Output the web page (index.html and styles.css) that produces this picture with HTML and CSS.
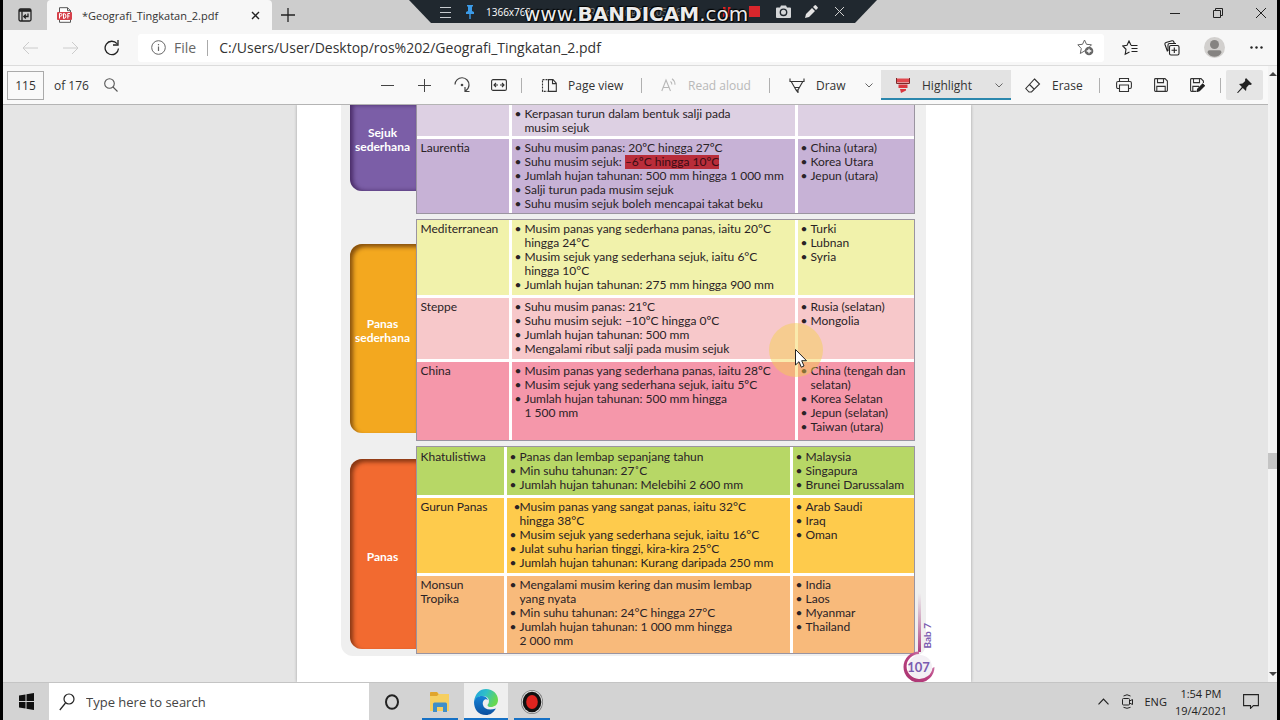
FILE: index.html
```html
<!DOCTYPE html>
<html lang="ms">
<head>
    <meta charset="UTF-8">
    <meta name="viewport" content="width=device-width, initial-scale=1.0">
    <title>Geografi_Tingkatan_2.pdf</title>
    <link rel="stylesheet" href="styles.css">
</head>
<body>
    <header class="tab-strip">
        <button class="tab-actions" aria-label="Tab actions">
            <svg width="14" height="14" viewBox="0 0 14 14" fill="none" stroke="#222" stroke-width="1.3"><rect x="1" y="1" width="12" height="12" rx="1.5"/><path d="M1 2.500h12" stroke-width="2.6"/><path d="M4 3v10M10 5.500v3H6M7.800 6.500l-2 2 2 2"/></svg>
        </button>
        <div class="tab">
            <svg width="16" height="16" viewBox="0 0 16 16"><path d="M2.500.7h8l3 3v11.600h-11z" fill="#fff" stroke="#555"/><path d="M10.500.7v3h3" fill="none" stroke="#555"/><rect x="0" y="5" width="15" height="8" rx="1" fill="#d6404a"/><path d="M2.500 11.500v-5h1.300q1.200 0 1.200 1.300T3.800 9.100H2.500M6.500 6.500v5q2.500 0 2.500-2.500T6.500 6.500M10.800 11.500v-5H13M10.800 9h1.800" fill="none" stroke="#fff"/></svg>
            <span class="tab-title">*Geografi_Tingkatan_2.pdf</span>
            <button class="tab-close" aria-label="Close tab">
                <svg width="9" height="9" viewBox="0 0 9 9" stroke="#222" stroke-width="1.400"><path d="M1 1l7 7M8 1L1 8"/></svg>
            </button>
        </div>
        <button class="new-tab" aria-label="New tab">
            <svg width="14" height="14" viewBox="0 0 14 14" stroke="#222" stroke-width="1.300"><path d="M7 0v14M0 7h14"/></svg>
        </button>
        <div class="window-buttons">
            <button aria-label="Minimize"><svg width="10" height="10" viewBox="0 0 10 10" stroke="#222"><path d="M0 5.500h10"/></svg></button>
            <button aria-label="Restore"><svg width="10" height="10" viewBox="0 0 10 10" fill="none" stroke="#222"><path d="M.5 2.500h7v7h-7zM2.500 2.500v-2h7v7h-2"/></svg></button>
            <button aria-label="Close"><svg width="10" height="10" viewBox="0 0 10 10" stroke="#222"><path d="M0 0l10 10M10 0L0 10"/></svg></button>
        </div>

        <!-- recorder bar floating over the tab strip -->
        <div class="recorder">
            <svg width="12" height="12" viewBox="0 0 12 12" stroke="#c8ccd0"><path d="M0 1.500h11M0 6.500h11M0 11.500h11"/></svg>
            <svg class="rec-pin" width="10" height="14" viewBox="0 0 10 14" fill="#3b9be8"><path d="M2 0h6v1.500H7V6l2 1v2H1V7l2-1V1.500H2zM4.300 9h1.400v5H4.300z"/></svg>
            <span class="rec-size">1366x768</span>
            <span class="rec-status">Recording [00:05:26]</span>
            <svg class="rec-pause" width="8" height="10" viewBox="0 0 8 10" fill="#d22"><path d="M0 0h2.500v10H0zM5 0h2.500v10H5z"/></svg>
            <svg class="rec-stop" width="11" height="11" viewBox="0 0 11 11"><path fill="#d8262c" d="M0 0h11v11H0z"/></svg>
            <svg class="rec-photo" width="15" height="13" viewBox="0 0 15 13"><path d="M1 2.500h3L5 .5h5l1 2h3q1 0 1 1V12q0 1-1 1H1q-1 0-1-1V3.500q0-1 1-1z" fill="#d4d6d8"/><circle cx="7.500" cy="7.300" r="3.200" fill="none" stroke="#20282f" stroke-width="1.400"/></svg>
            <svg class="rec-pen" width="13" height="13" viewBox="0 0 13 13" fill="#e4e4e4"><path d="M0 13l1-4 6-6 3 3-6 6zM8 2l1.500-1.500q.8-.8 1.600 0L12.500 2q.8.8 0 1.500L11 5z"/></svg>
            <svg width="9" height="9" viewBox="0 0 9 9" stroke="#d0d0d0"><path d="M0 0l9 9M9 0L0 9"/></svg>
            <strong class="watermark">www.<b>BANDICAM</b>.com</strong>
        </div>
    </header>

    <nav class="address-row">
        <div class="nav-buttons">
            <button aria-label="Back"><svg width="16" height="14" viewBox="0 0 16 14" fill="none" stroke="#ccc"><path d="M16 7H1M7 1L1 7l6 6"/></svg></button>
            <button aria-label="Forward"><svg width="16" height="14" viewBox="0 0 16 14" fill="none" stroke="#ccc"><path d="M0 7h15M9 1l6 6-6 6"/></svg></button>
            <button aria-label="Refresh"><svg width="16" height="16" viewBox="0 0 16 16" fill="none" stroke="#222" stroke-width="1.300"><path d="M14.500 8.500A6.700 6.700 0 1 1 13 3.700M14 0v5H9"/></svg></button>
        </div>
        <div class="address-box">
            <svg width="15" height="15" viewBox="0 0 15 15" fill="none" stroke="#666"><circle cx="7.500" cy="7.500" r="6.800"/><path d="M7.500 6.500V11M7.500 4v1.300" stroke-width="1.200"/></svg>
            <label class="scheme" for="url">File</label>
            <input id="url" type="text" value="C:/Users/User/Desktop/ros%202/Geografi_Tingkatan_2.pdf">
            <button aria-label="Add to favorites">
                <svg width="17" height="17" viewBox="0 0 17 17" fill="none" stroke="#666"><path d="M7.500 1l2 4.300 5 .5-2 2M8 11.700L3.300 14.500l1-5L.8 5.800l4.700-.5L7.500 1"/><circle cx="12" cy="12" r="4.300" fill="#666" stroke="none"/><path d="M12 9.700v4.600M9.700 12h4.600" stroke="#fff" stroke-width="1.300"/></svg>
            </button>
        </div>
        <div class="browser-buttons">
            <button aria-label="Favorites"><svg width="16" height="16" viewBox="0 0 16 16" fill="none" stroke="#222" stroke-width="1.100"><path d="M9 5.300L7 1 5 5.300.8 6l3.200 3.300-.8 5L7.500 12M9 5.500h6.500M9.500 8.500h6M9.500 11.500h6"/></svg></button>
            <button aria-label="Collections"><svg width="16" height="16" viewBox="0 0 16 16" fill="none" stroke="#222" stroke-width="1.100"><rect x="5.500" y="5.500" width="9.500" height="9.500" rx="1.500"/><path d="M10.300 7.500v5.500M7.500 10.300H13M3.500 11.500L1 4.500Q.6 3 2 2.500L8 .8q1.300-.3 1.800 1l.5 1.700M4 11V5q0-1.500 1.500-1.500H12"/></svg></button>
            <button aria-label="Profile"><svg width="21" height="21" viewBox="0 0 21 21"><circle cx="10.500" cy="10.500" r="10.500" fill="#d2d0ce"/><circle cx="10.500" cy="7.500" r="4.500" fill="#858381"/><path d="M3.500 15.500q0-2.200 2-2.200h10q2 0 2 2.200-2.300 4.300-7 4.300t-7-4.300z" fill="#858381"/></svg></button>
            <button aria-label="Settings and more"><svg width="13" height="3" viewBox="0 0 13 3" fill="#222"><circle cx="1.500" cy="1.500" r="1.200"/><circle cx="6.500" cy="1.500" r="1.200"/><circle cx="11.500" cy="1.500" r="1.200"/></svg></button>
        </div>
    </nav>

    <main class="content">
        <div class="pdf">
            <div class="toolbar">
                <input class="page-input" id="page" type="text" value="115">
                <label class="page-total" for="page">of 176</label>
                <button class="icon-btn find" aria-label="Find"><svg width="14" height="14" viewBox="0 0 14 14" fill="none" stroke="#555" stroke-width="1.100"><circle cx="5.500" cy="5.500" r="4.800"/><path d="M9 9l4.500 4.500"/></svg></button>

                <div class="tools">
                    <button class="icon-btn" aria-label="Zoom out"><svg width="13" height="13" viewBox="0 0 13 13" stroke="#444"><path d="M0 6.500h13"/></svg></button>
                    <button class="icon-btn" aria-label="Zoom in"><svg width="13" height="13" viewBox="0 0 13 13" stroke="#444"><path d="M0 6.500h13M6.500 0v13"/></svg></button>
                    <button class="icon-btn" aria-label="Rotate"><svg width="16" height="16" viewBox="0 0 16 16" fill="none" stroke="#444" stroke-width="1.200"><path d="M1 7.500A7 7 0 0 1 15 8q0 3.500-3.500 6M11 10v4.500h4.500"/><circle cx="8" cy="8" r="1.300" fill="#444" stroke="none"/></svg></button>
                    <button class="icon-btn" aria-label="Fit to width"><svg width="16" height="12" viewBox="0 0 16 12" fill="none" stroke="#333" stroke-width="1.100"><rect x=".6" y=".6" width="14.800" height="10.800" rx="1.500"/><path d="M7 6H3M5 4L3 6l2 2M9 6h4M11 4l2 2-2 2"/></svg></button>
                    <span class="sep"></span>
                    <button class="tool page-view"><svg width="16" height="13" viewBox="0 0 16 13" fill="none" stroke="#333" stroke-width="1.100"><path d="M6.500.6h-5v11.800h5" stroke-dasharray="2 1"/><path d="M7.500.6H12l3.300 3.500v8.300H7.500zM11.500.6v4h3.800"/></svg>Page view</button>
                    <span class="sep"></span>
                    <button class="tool read-aloud" disabled><svg width="16" height="14" viewBox="0 0 16 14" fill="none" stroke="#b8b8b8" stroke-width="1.100"><path d="M.8 13L5 2l4.500 11M2.300 9.500h5.500M9.500 3.500q1.500 1 1.300 3M11 .8q3 2 3 6"/></svg>Read aloud</button>
                    <span class="sep"></span>
                    <button class="tool draw"><svg width="16" height="15" viewBox="0 0 16 15" fill="none" stroke="#333" stroke-width="1.100"><path d="M1 .5v3h14v-3M2.200 3.500L7 12l2 2.500V12l4.800-8.500M5.500 9.500h5M7 12h2"/></svg>Draw<svg class="chevron" width="8" height="5" viewBox="0 0 8 5" fill="none" stroke="#666"><path d="M.5.5L4 4 7.500.5"/></svg></button>
                    <button class="tool highlight"><svg width="16" height="15" viewBox="0 0 16 15"><path d="M2 .5h12v4H2z" fill="#e0484e"/><path d="M1.500 0v5.500h13V0" fill="none" stroke="#7a2a2a"/><path d="M3.500 6.500h9V10h-9z" fill="#d9363e"/><path d="M5 11h6v1.500L6 15z" fill="#d9363e"/></svg>Highlight<svg class="chevron" width="8" height="5" viewBox="0 0 8 5" fill="none" stroke="#666"><path d="M.5.5L4 4 7.500.5"/></svg></button>
                    <button class="tool erase"><svg width="16" height="15" viewBox="0 0 16 15" fill="none" stroke="#333" stroke-width="1.100"><path d="M9.500 1l5 5-8 8H4L.8 10.500zM4.500 6.500l5 5"/></svg>Erase</button>
                    <span class="sep"></span>
                    <button class="icon-btn" aria-label="Print"><svg width="16" height="14" viewBox="0 0 16 14" fill="none" stroke="#333" stroke-width="1.100"><path d="M3.500 3.500v-3h9v3M3.500 10.500H2Q.6 10.500.6 9V5Q.6 3.500 2 3.500h12q1.400 0 1.400 1.500v4q0 1.500-1.400 1.500h-1.500M3.500 7h9v6.500h-9z"/></svg></button>
                    <button class="icon-btn" aria-label="Save"><svg width="14" height="14" viewBox="0 0 14 14" fill="none" stroke="#333" stroke-width="1.100"><path d="M.6 1.500q0-.9.900-.9h9.500l2.400 2.400v9.500q0 .9-.9.900H1.500q-.9 0-.9-.9zM3.500.6v4h6v-4M2.800 13.400v-5h8.400v5"/></svg></button>
                    <button class="icon-btn" aria-label="Save as"><svg width="15" height="14" viewBox="0 0 15 14" fill="none" stroke="#333" stroke-width="1.100"><path d="M6 13.400H1.500q-.9 0-.9-.9v-11q0-.9.900-.9h9.500l2.400 2.400V5M3.500.6v4h6v-4M2.800 13v-4.600H9"/><path d="M7 13.500l.7-2.500 5-5 1.700 1.700-5 5z" fill="#222" stroke="#222"/></svg></button>
                    <span class="sep"></span>
                    <button class="icon-btn pinned" aria-label="Unpin toolbar"><svg width="15" height="15" viewBox="0 0 15 15" fill="#222"><path d="M9 0l6 6-1.500 1L12 6.800 9.500 9.500 9 13 5.800 9.900 1 15l-1-.2L4.900 9 2 6l3.500-.5L8.200 3 8 1.500z"/></svg></button>
                </div>
            </div>

            <div class="viewer">
                <article class="page">
                    <div class="panel">
                        <section class="group">
                            <h2 class="zone zone-purple">Sejuk sederhana</h2>
                            <table>
                                <tr class="lilac">
                                    <td class="name"></td>
                                    <td class="traits"><ul><li>Kerpasan turun dalam bentuk salji pada<br>musim sejuk</li></ul></td>
                                    <td></td>
                                </tr>
                                <tr class="violet">
                                    <td>Laurentia</td>
                                    <td><ul>
                                        <li>Suhu musim panas: 20ºC hingga 27ºC</li>
                                        <li>Suhu musim sejuk: <mark>–6ºC hingga 10ºC</mark></li>
                                        <li>Jumlah hujan tahunan: 500 mm hingga 1 000 mm</li>
                                        <li>Salji turun pada musim sejuk</li>
                                        <li>Suhu musim sejuk boleh mencapai takat beku</li>
                                    </ul></td>
                                    <td><ul><li>China (utara)</li><li>Korea Utara</li><li>Jepun (utara)</li></ul></td>
                                </tr>
                            </table>
                        </section>

                        <section class="group">
                            <h2 class="zone zone-amber">Panas sederhana</h2>
                            <table>
                                <tr class="yellow">
                                    <td class="name">Mediterranean</td>
                                    <td class="traits"><ul>
                                        <li>Musim panas yang sederhana panas, iaitu 20°C<br>hingga 24°C</li>
                                        <li>Musim sejuk yang sederhana sejuk, iaitu 6°C<br>hingga 10°C</li>
                                        <li>Jumlah hujan tahunan: 275 mm hingga 900 mm</li>
                                    </ul></td>
                                    <td><ul><li>Turki</li><li>Lubnan</li><li>Syria</li></ul></td>
                                </tr>
                                <tr class="rose">
                                    <td>Steppe</td>
                                    <td><ul>
                                        <li>Suhu musim panas: 21ºC</li>
                                        <li>Suhu musim sejuk: –10ºC hingga 0ºC</li>
                                        <li>Jumlah hujan tahunan: 500 mm</li>
                                        <li>Mengalami ribut salji pada musim sejuk</li>
                                    </ul></td>
                                    <td><ul><li>Rusia (selatan)</li><li>Mongolia</li></ul></td>
                                </tr>
                                <tr class="pink">
                                    <td>China</td>
                                    <td><ul>
                                        <li>Musim panas yang sederhana panas, iaitu 28ºC</li>
                                        <li>Musim sejuk yang sederhana sejuk, iaitu 5ºC</li>
                                        <li>Jumlah hujan tahunan: 500 mm hingga<br>1 500 mm</li>
                                    </ul></td>
                                    <td><ul><li>China (tengah dan<br>selatan)</li><li>Korea Selatan</li><li>Jepun (selatan)</li><li>Taiwan (utara)</li></ul></td>
                                </tr>
                            </table>
                        </section>

                        <section class="group hot">
                            <h2 class="zone zone-orange">Panas</h2>
                            <table>
                                <tr class="green">
                                    <td class="name">Khatulistiwa</td>
                                    <td class="traits"><ul>
                                        <li>Panas dan lembap sepanjang tahun</li>
                                        <li>Min suhu tahunan: 27˚C</li>
                                        <li>Jumlah hujan tahunan: Melebihi 2 600 mm</li>
                                    </ul></td>
                                    <td><ul><li>Malaysia</li><li>Singapura</li><li>Brunei Darussalam</li></ul></td>
                                </tr>
                                <tr class="gold">
                                    <td>Gurun Panas</td>
                                    <td><ul>
                                        <li class="tight">Musim panas yang sangat panas, iaitu 32°C<br>hingga 38°C</li>
                                        <li>Musim sejuk yang sederhana sejuk, iaitu 16°C</li>
                                        <li>Julat suhu harian tinggi, kira-kira 25°C</li>
                                        <li>Jumlah hujan tahunan: Kurang daripada 250 mm</li>
                                    </ul></td>
                                    <td><ul><li>Arab Saudi</li><li>Iraq</li><li>Oman</li></ul></td>
                                </tr>
                                <tr class="peach">
                                    <td>Monsun<br>Tropika</td>
                                    <td><ul>
                                        <li>Mengalami musim kering dan musim lembap<br>yang nyata</li>
                                        <li>Min suhu tahunan: 24°C hingga 27°C</li>
                                        <li>Jumlah hujan tahunan: 1 000 mm hingga<br>2 000 mm</li>
                                    </ul></td>
                                    <td><ul><li>India</li><li>Laos</li><li>Myanmar</li><li>Thailand</li></ul></td>
                                </tr>
                            </table>
                        </section>
                    </div>

                    <div class="chapter">Bab 7</div>
                    <div class="folio">
                        <svg width="32" height="90" viewBox="0 0 32 90" fill="none">
                            <defs>
                                <linearGradient id="stem" x1="0" y1="0" x2="0" y2="1"><stop offset="0" stop-color="#b05a92" stop-opacity="0"/><stop offset="1" stop-color="#ad3f80"/></linearGradient>
                                <linearGradient id="ring" x1="1" y1="0" x2="0" y2="1"><stop offset="0" stop-color="#d9a3c4"/><stop offset=".5" stop-color="#b93f80"/><stop offset="1" stop-color="#a8356f"/></linearGradient>
                            </defs>
                            <path d="M15 0h3v59h-3z" fill="url(#stem)"/>
                            <circle cx="17" cy="74" r="12" fill="#f3eff4"/>
                            <path d="M16 58.500A15.500 15.500 0 1 0 31.500 74l-2 1A13 12.500 0 1 1 16 61z" fill="url(#ring)"/>
                        </svg>
                        <span>107</span>
                    </div>
                    <div class="pointer">
                        <svg width="54" height="54" viewBox="0 0 54 54"><circle cx="27" cy="27" r="27" fill="#f3d04a" fill-opacity=".45"/><path d="M26.500 26.500v15.500l3.500-3.300 2.300 5.500 2.700-1.200-2.300-5.300h4.800z" fill="#fff" stroke="#222"/></svg>
                    </div>
                </article>
            </div>
        </div>

        <div class="scrollbar">
            <span class="arrow up"></span>
            <span class="thumb"></span>
            <span class="arrow down"></span>
        </div>
    </main>

    <footer class="taskbar">
        <button class="start" aria-label="Start"><svg width="15" height="17" viewBox="0 0 15 17" fill="#111"><path d="M0 2.500l6.500-1V8H0zM7.500 1.300L15 0v8H7.500zM0 9h6.500v6.500L0 14.500zM7.500 9H15v8l-7.500-1.300z"/></svg></button>
        <label class="search">
            <svg width="16" height="18" viewBox="0 0 16 18" fill="none" stroke="#222" stroke-width="1.200"><circle cx="10" cy="6" r="5"/><path d="M6.500 10L.8 17"/></svg>
            <input type="text" placeholder="Type here to search" aria-label="Search">
        </label>
        <button class="app cortana" aria-label="Cortana"><svg width="14" height="16" viewBox="0 0 14 16" fill="none" stroke="#222" stroke-width="2"><ellipse cx="7" cy="8" rx="6" ry="6.800"/></svg></button>
        <button class="app open" aria-label="File Explorer"><svg width="20" height="20" viewBox="0 0 20 20"><path d="M0 1q0-1 1-1h6l2 2h10v17H0z" fill="#f6cf60"/><path d="M0 1q0-1 1-1h6l1.500 2.500L7 4H0z" fill="#e0a52c"/><path d="M3 20v-8q0-1.500 1.500-1.500h11Q17 10.500 17 12v8h-4v-5H7v5z" fill="#3f8fc8"/></svg></button>
        <button class="app open active" aria-label="Microsoft Edge">
            <svg width="24" height="26" viewBox="0 0 24 26">
                <defs>
                    <linearGradient id="edge-top" x1="0" y1="0" x2="1" y2=".4"><stop offset="0" stop-color="#1e9fe0"/><stop offset=".5" stop-color="#2fc0c8"/><stop offset="1" stop-color="#66d850"/></linearGradient>
                    <linearGradient id="edge-low" x1="0" y1="0" x2="0" y2="1"><stop offset="0" stop-color="#1684d8"/><stop offset="1" stop-color="#0c4f9e"/></linearGradient>
                </defs>
                <path d="M0 13C1 4 6 0 12 0c7 0 12 5 12 11 0 5-4 7-7 7-4 0-4-2-2.500-3.500C16 11 14 7 9 7 4 7 1 10 0 13z" fill="url(#edge-top)"/>
                <path d="M0 13C1 9 4 7 8 7c3 0 5 1.500 6 4-3-2-6 1-5 5 1 4 6 6 13 3.500C19 24 16 26 12 26 4 26 0 20 0 13z" fill="url(#edge-low)"/>
            </svg>
        </button>
        <button class="app open" aria-label="Bandicam"><svg width="22" height="24" viewBox="0 0 22 24"><ellipse cx="11" cy="12" rx="11" ry="12" fill="#777"/><ellipse cx="11" cy="12" rx="10.300" ry="11.300" fill="#ddd"/><ellipse cx="11" cy="12" rx="9.300" ry="10.300" fill="#111"/><ellipse cx="11" cy="12" rx="5.800" ry="7" fill="#e0241f"/></svg></button>
        <div class="tray">
            <svg width="11" height="7" viewBox="0 0 11 7" fill="none" stroke="#222" stroke-width="1.200"><path d="M.5 6.300L5.500 1l5 5.300"/></svg>
            <svg class="meet" width="11" height="15" viewBox="0 0 11 15" fill="none" stroke="#222"><rect x=".5" y="4.500" width="7" height="6.500" rx="1"/><path d="M7.500 7l3-1.500v5l-3-1.500M1.500 2q3.500-2.500 7 0M1.500 13.300q3.500 2 7 0"/></svg>
            <span class="lang">ENG</span>
            <time class="clock">1:54 PM<br>19/4/2021</time>
            <svg class="notices" width="16" height="15" viewBox="0 0 16 15" fill="none" stroke="#222" stroke-width="1.100"><path d="M.6.6h14.800v11h-5L7.500 14.400v-2.800H.6z"/></svg>
        </div>
    </footer>
</body>
</html>
```

FILE: styles.css
```css
* {
    box-sizing: border-box;
}
body {
    margin: 0;
    padding: 0 3px;
    height: 100vh;
    display: flex;
    flex-direction: column;
    overflow: hidden;
    background-color: #000;
    color: #333;
    font-family: "Open Sans", "Noto Sans", sans-serif;
    font-size: 12px;
}
button {
    display: flex;
    align-items: center;
    justify-content: center;
    margin: 0;
    padding: 0;
    border: none;
    background: none;
    color: inherit;
    font: inherit;
}
input {
    border: none;
    padding: 0;
    background: none;
    color: inherit;
    font: inherit;
}
svg {
    display: block;
    flex: none;
}

/* tab strip */
.tab-strip {
    position: relative;
    display: flex;
    flex: none;
    height: 30px;
    background-color: #cdcdcd;
}
.tab-actions {
    width: 44px;
}
.tab {
    display: flex;
    align-items: center;
    width: 225px;
    padding: 0 12px 0 10px;
    border-radius: 4px 4px 0 0;
    background-color: #f7f7f7;
}
.tab-title {
    flex: 1;
    padding-left: 9px;
    font-size: 11px;
}
.new-tab {
    width: 32px;
}
.window-buttons {
    display: flex;
    gap: 11px;
    height: 26px;
    margin-left: auto;
}
.window-buttons button {
    width: 32px;
}

.recorder {
    position: absolute;
    top: 0;
    left: 406px;
    width: 468px;
    height: 23px;
    display: flex;
    align-items: center;
    padding: 0 33px 0 31px;
    background-color: #20282f;
    clip-path: polygon(0 0, 100% 0, 446px 100%, 22px 100%);
    color: #fff;
    font-size: 10px;
}
.rec-pin {
    margin-left: 13px;
}
.rec-size {
    margin-left: 11px;
}
.rec-status {
    margin-left: 58px;
    color: #7c8388;
}
.rec-pause {
    margin-left: auto;
}
.rec-stop {
    margin-left: 18px;
}
.rec-photo {
    margin-left: 16px;
}
.rec-pen {
    margin-left: 14px;
}
.rec-pen + svg {
    margin-left: 17px;
}
.watermark {
    position: absolute;
    top: 4px;
    left: 115px;
    color: #ececec;
    font-family: "DejaVu Sans", sans-serif;
    font-size: 20px;
    line-height: 20px;
    font-weight: normal;
    text-shadow: 0 0 2px #000, 1px 1px 1px #000, -1px -1px 1px #000;
}

/* address row */
.address-row {
    display: flex;
    flex: none;
    align-items: center;
    height: 36px;
    background-color: #f7f7f7;
    border-bottom: 1px solid #dcdcdc;
}
.nav-buttons {
    display: flex;
    padding: 0 6px;
}
.nav-buttons button {
    width: 41px;
}
.address-box {
    display: flex;
    flex: 1;
    align-items: center;
    height: 28px;
    padding: 0 10px 0 13px;
    border-radius: 3px;
    background-color: #fff;
    font-size: 14px;
}
.scheme {
    padding: 0 11px 0 8px;
    border-right: 1px solid #aaa;
    color: #666;
    line-height: 16px;
}
.address-box input {
    flex: 1;
    padding-left: 11px;
}
.browser-buttons {
    display: flex;
    padding-left: 5px;
}
.browser-buttons button {
    width: 42px;
}

/* pdf toolbar */
.content {
    display: flex;
    flex: 1;
    min-height: 0;
    background-color: #f7f7f7;
}
.pdf {
    display: flex;
    flex: 1;
    flex-direction: column;
    min-width: 0;
}
.toolbar {
    display: flex;
    flex: none;
    align-items: center;
    height: 39px;
    padding: 0 5px 0 4px;
    border-bottom: 1px solid #b4b4b4;
    background-color: #f9f9f9;
}
.page-input {
    width: 37px;
    height: 29px;
    border: 1px solid #aaa;
    text-align: center;
}
.page-total {
    padding-left: 10px;
}
.find {
    margin-left: 4px;
}
.tools {
    display: flex;
    align-items: center;
    margin-left: auto;
}
.icon-btn {
    width: 37px;
    height: 30px;
}
.tool {
    justify-content: flex-start;
    gap: 11px;
    height: 30px;
    padding: 0 8px 0 14px;
}
.sep {
    width: 1px;
    height: 15px;
    margin: 0 5px 0 4px;
    background-color: #b0b0b0;
}
.page-view {
    width: 110px;
}
.read-aloud {
    width: 118px;
    color: #b8b8b8;
}
.draw {
    width: 106px;
}
.highlight {
    width: 130px;
    background-color: #e3e3e3;
    box-shadow: inset 0 -2px #2b87ad;
}
.erase {
    width: 84px;
}
.chevron {
    margin-left: auto;
}
.pinned {
    border-radius: 2px;
    background-color: #e5e5e5;
}

.scrollbar {
    display: flex;
    flex: none;
    flex-direction: column;
    align-items: center;
    width: 9px;
    padding: 6px 0;
    background-color: #f3f3f3;
}
.arrow {
    border: 4px solid transparent;
}
.up {
    border-top: none;
    border-bottom-color: #444;
}
.down {
    margin-top: auto;
    border-bottom: none;
    border-top-color: #444;
}
.thumb {
    width: 9px;
    height: 16px;
    margin-top: 377px;
    background-color: #c4c4c4;
}

/* document */
.viewer {
    display: flex;
    flex: 1;
    justify-content: center;
    min-height: 0;
    padding-right: 4px;
    overflow: hidden;
    background-color: #e5e5e5;
}
.page {
    position: relative;
    width: 674px;
    padding: 0 45px 0 44px;
    background-color: #fff;
    box-shadow: 0 0 3px rgba(0, 0, 0, 0.3);
    color: #2a2226;
    font-family: Lato, sans-serif;
    font-size: 12px;
    line-height: 14px;
}
.panel {
    display: flex;
    flex-direction: column;
    gap: 5px;
    padding: 0 11px 2px 9px;
    border-radius: 0 0 12px 12px;
    background-color: #efefef;
}
.group {
    display: grid;
    grid-template-columns: 66px 1fr;
}
.zone {
    display: flex;
    align-items: center;
    justify-content: center;
    margin: 25px 0 8px;
    padding-bottom: 16px;
    border-radius: 12px 0 0 12px;
    box-shadow: inset 3px 3px 4px rgba(60, 20, 0, 0.6);
    color: #fff;
    font-size: 12px;
    line-height: 14px;
    text-align: center;
}
.zone-purple {
    margin: 0 0 23px;
    border-radius: 0 0 0 12px;
    background-color: #7b5ea7;
    box-shadow: inset 3px 0 4px rgba(40, 10, 60, 0.6);
}
.zone-amber {
    background-color: #f3a81f;
}
.zone-orange {
    margin: 13px 0 5px;
    padding: 6px 0 0;
    background-color: #f26a30;
}
table {
    width: 100%;
    table-layout: fixed;
    border: 1px solid #9a94a0;
    border-spacing: 0;
}
.group:first-child table {
    border-top: none;
}
td {
    padding: 2px 3px 3px;
    border-right: 3px solid #fff;
    border-bottom: 3px solid #fff;
    vertical-align: top;
}
td:first-child {
    padding-left: 4px;
}
td:last-child {
    border-right: none;
}
tr:last-child td {
    border-bottom: none;
}
.name {
    width: 95px;
}
.traits {
    width: 286px;
}
.hot .name {
    width: 90px;
}
ul {
    margin: 0;
    padding: 0;
    list-style: none;
}
li {
    position: relative;
    padding-left: 10px;
    white-space: nowrap;
}
li::before {
    content: "•";
    position: absolute;
    left: 0;
}
.tight::before {
    left: 4px;
}
mark {
    display: inline-block;
    background-color: #b92d3a;
    color: #3a0c14;
}
.lilac {
    background-color: #ddd0e3;
}
.lilac td {
    padding-bottom: 1px;
}
.violet {
    background-color: #c7b2d6;
}
.violet td {
    padding-bottom: 2px;
}
.yellow {
    background-color: #f1f2ab;
}
.rose {
    background-color: #f7c8ca;
}
.pink {
    background-color: #f597aa;
}
.pink td {
    padding-bottom: 6px;
}
.green {
    background-color: #b7d766;
}
.green td {
    padding: 3px;
}
.green td:first-child {
    padding-left: 4px;
}
.gold {
    background-color: #fecb4c;
}
.peach {
    background-color: #f8ba7b;
}
.peach td {
    padding-bottom: 5px;
}

.chapter {
    position: absolute;
    top: 518px;
    right: 37px;
    color: #7a5bb0;
    font-size: 10px;
    font-weight: bold;
    writing-mode: vertical-rl;
    transform: rotate(180deg);
}
.folio {
    position: absolute;
    top: 488px;
    right: 36px;
}
.folio span {
    position: absolute;
    right: 1px;
    bottom: 9px;
    width: 30px;
    color: #7a5bb0;
    font-size: 13px;
    font-weight: bold;
    text-align: center;
}
.pointer {
    position: absolute;
    top: 218px;
    left: 472px;
}

/* taskbar */
.taskbar {
    display: flex;
    flex: none;
    height: 38px;
    border-top: 1px solid #c4c4c4;
    background-color: #d3d3d3;
}
.start {
    width: 46px;
}
.search {
    display: flex;
    align-items: center;
    width: 320px;
    padding-left: 10px;
    background-color: #fff;
    font-size: 13px;
}
.search input {
    flex: 1;
    padding-left: 11px;
}
.search input::placeholder {
    color: #444;
}
.app {
    width: 44px;
    margin: 0 1px;
}
.cortana {
    margin-right: 3px;
}
.open {
    background: linear-gradient(#1671c5, #1671c5) center bottom / 36px 2px no-repeat;
}
.active {
    background-color: #efefef;
    background-size: 100% 2px;
}
.tray {
    display: flex;
    align-items: center;
    margin-left: auto;
    padding-right: 18px;
    color: #222;
    font-size: 11px;
}
.meet {
    margin-left: 13px;
}
.lang {
    margin-left: 11px;
}
.clock {
    margin-left: 8px;
    line-height: 17px;
    text-align: center;
}
.notices {
    margin-left: 16px;
}
```
